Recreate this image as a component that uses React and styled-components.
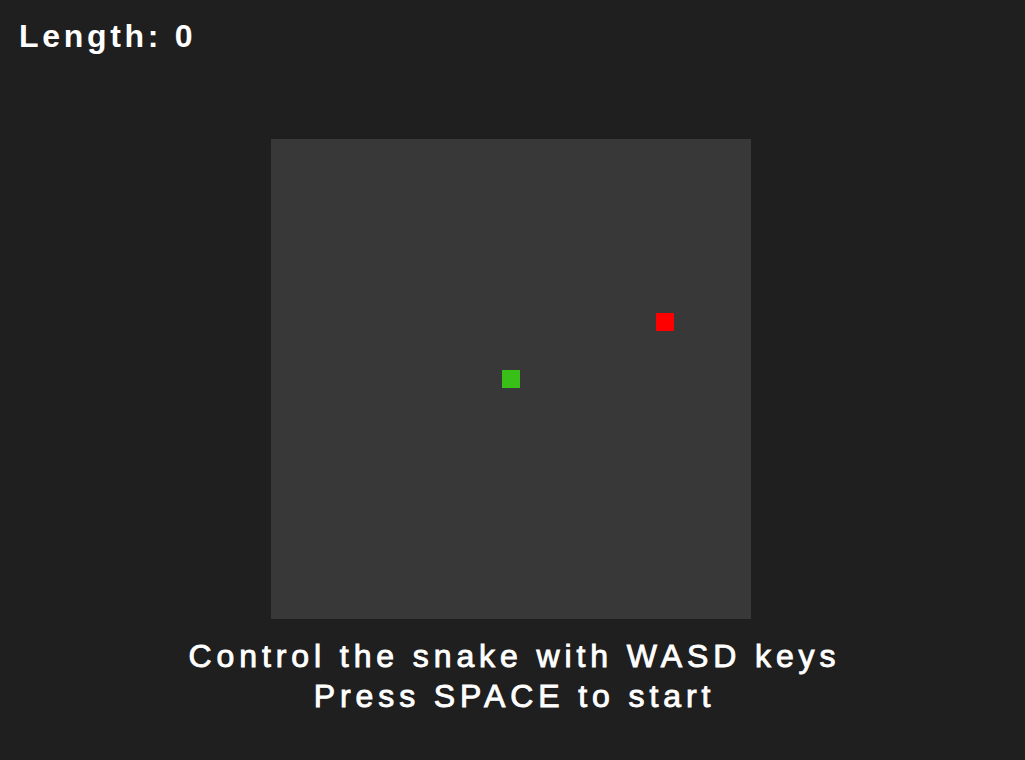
import React from "react";
import styled, { createGlobalStyle } from "styled-components";

const Global = createGlobalStyle`
  html, body { margin: 0; padding: 0; background: #1f1f1f; }
  body { font-family: "Liberation Sans", Arial, sans-serif; color: #ffffff; }
`;

const Page = styled.div`
  width: 1025px;
  height: 760px;
  display: flex;
  flex-direction: column;
  align-items: center;
  overflow: hidden;
`;

const Score = styled.div`
  align-self: flex-start;
  margin: 14px 0 0 19px;
  font-size: 32px;
  font-weight: 700;
  letter-spacing: 3.7px;
  line-height: 44px;
`;

const Board = styled.div`
  position: relative;
  width: 480px;
  height: 480px;
  margin-top: 81px;
  margin-right: 3px;
  background: #383838;
`;

const Cell = styled.div`
  position: absolute;
  width: 18px;
  height: 18px;
  background: ${(p) => p.$color};
`;

const Hint = styled.div`
  margin-top: 17px;
  margin-left: 4px;
  font-size: 32px;
  font-weight: 400;
  letter-spacing: 4.9px;
  line-height: 40px;
  text-align: center;
  -webkit-text-stroke: 0.9px #ffffff;
`;

export default function App() {
  return (
    <>
      <Global />
      <Page>
        <Score>Length: 0</Score>
        <Board>
          <Cell $color="#38c018" style={{ left: 231, top: 231 }} />
          <Cell $color="#ff0000" style={{ left: 385, top: 174 }} />
        </Board>
        <Hint>
          Control the snake with WASD keys
          <br />
          Press SPACE to start
        </Hint>
      </Page>
    </>
  );
}
